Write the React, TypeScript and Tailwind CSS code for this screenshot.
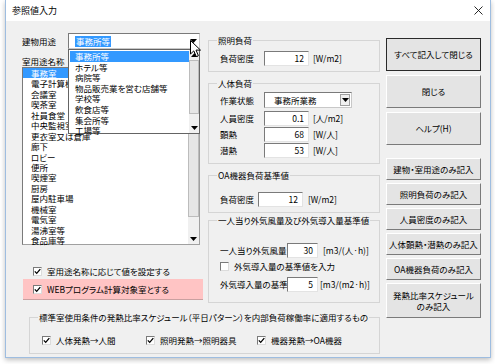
import React from "react"

const roomItems = [
  "事務室",
  "電子計算機室",
  "会議室",
  "喫茶室",
  "社員食堂",
  "中央監視室",
  "更衣室又は倉庫",
  "廊下",
  "ロビー",
  "便所",
  "喫煙室",
  "厨房",
  "屋内駐車場",
  "機械室",
  "電気室",
  "湯沸室等",
  "食品庫等"
]

const buildingItems = [
  "事務所等",
  "ホテル等",
  "病院等",
  "物品販売業を営む店舗等",
  "学校等",
  "飲食店等",
  "集会所等",
  "工場等"
]

function Check({ checked }: { checked?: boolean }) {
  return (
    <span className="relative inline-block h-[9px] w-[9px] shrink-0 border border-t-[#7a7a7a] border-l-[#7a7a7a] border-r-[#dcdcdc] border-b-[#dcdcdc] bg-white">
      {checked && (
        <svg viewBox="0 0 7 7" className="absolute left-0 top-0 h-[7px] w-[7px]">
          <path d="M0.8 3.4 L2.7 5.4 L6.3 1.2" stroke="#000" strokeWidth="1.3" fill="none" />
        </svg>
      )}
    </span>
  )
}

function DownTri() {
  return (
    <svg viewBox="0 0 7 4" className="h-[4px] w-[7px]">
      <path d="M0 0 L7 0 L3.5 4 Z" fill="#000" />
    </svg>
  )
}

function UpTri() {
  return (
    <svg viewBox="0 0 7 4" className="h-[4px] w-[7px]">
      <path d="M0 4 L7 4 L3.5 0 Z" fill="#000" />
    </svg>
  )
}

function Group({
  title,
  className,
  children
}: {
  title: string
  className: string
  children?: React.ReactNode
}) {
  return (
    <div className={`relative border border-[#d5d5d5] ${className}`}>
      <span className="absolute left-[8px] top-[-7px] whitespace-nowrap bg-[#f0f0f0] px-[1px] leading-[12px]">
        {title}
      </span>
      {children}
    </div>
  )
}

function Field({
  label,
  value,
  unit,
  labelW,
  inputW,
  unitGap
}: {
  label: string
  value: string
  unit: string
  labelW: string
  inputW: string
  unitGap: string
}) {
  return (
    <div className="flex h-[15px] items-center">
      <span className={`${labelW} whitespace-nowrap`}>{label}</span>
      <span
        className={`${inputW} flex h-[15px] items-center justify-end border border-t-[#7a7a7a] border-l-[#7a7a7a] border-r-[#e3e3e3] border-b-[#e3e3e3] bg-white pr-[4px]`}>
        {value}
      </span>
      <span className={`${unitGap} whitespace-nowrap`}>{unit}</span>
    </div>
  )
}

function Btn({
  children,
  h,
  main,
  mt
}: {
  children: React.ReactNode
  h: string
  main?: boolean
  mt: string
}) {
  return (
    <div
      className={`${h} ${mt} flex w-[95px] items-center justify-center border text-center leading-[11px] ${
        main
          ? "border-[#2a2a2a] bg-[#e4e4e4]"
          : "border-t-white border-l-white border-r-[#7a7a7a] border-b-[#7a7a7a] bg-[#e4e4e4]"
      }`}>
      {children}
    </div>
  )
}

export default function App() {
  return (
    <div className="h-[364px] w-[495px] bg-white pl-[5px] font-['Noto_Sans_CJK_JP',sans-serif] text-[8.5px] text-black [font-feature-settings:'palt']">
      <div className="w-[486px] border-x border-b border-[#9ebde0] shadow-[0_2px_5px_rgba(0,0,0,0.25)]">
        {/* title bar */}
        <div className="flex h-[21px] items-center justify-between bg-white pl-[6px] pr-[7px]">
          <span className="text-[9px]">参照値入力</span>
          <svg viewBox="0 0 9 9" className="h-[9px] w-[9px]">
            <path d="M0.5 0.5 L8.5 8.5 M8.5 0.5 L0.5 8.5" stroke="#111" strokeWidth="0.9" />
          </svg>
        </div>

        {/* body */}
        <div className="relative flex h-[336px] bg-[#f0f0f0] pl-[16px] pt-[12px]">
          <div className="flex w-[358px] flex-col">
            <div className="flex">
              {/* left column */}
              <div className="flex w-[181px] flex-col">
                <div className="flex h-[16px] items-center">
                  <span className="w-[46px]">建物用途</span>
                  <div className="flex h-[16px] w-[132px] items-center justify-between border border-t-[#7a7a7a] border-l-[#7a7a7a] border-r-[#c8c8c8] border-b-[#c8c8c8] bg-white pl-[6px] pr-[2px]">
                    <span className="bg-[#3399ff] px-[1px] leading-[11px] text-white">事務所等</span>
                    <DownTri />
                  </div>
                </div>
                <div className="mt-[6px] h-[12px] leading-[12px]">室用途名称</div>
                <div className="flex h-[178px] w-[178px] border border-t-[#7a7a7a] border-l-[#7a7a7a] border-r-[#a0a0a0] border-b-[#a0a0a0] bg-white">
                  <div className="flex flex-1 flex-col">
                    {roomItems.map((it, i) => (
                      <div
                        key={it}
                        className={`h-[10.44px] whitespace-nowrap pl-[8px] leading-[10.44px] ${
                          i === 0 ? "bg-[#3399ff] text-white" : ""
                        }`}>
                        {it}
                      </div>
                    ))}
                  </div>
                  <div className="flex w-[11px] flex-col bg-[#f0f0f0]">
                    <div className="flex h-[10px] items-center justify-center">
                      <UpTri />
                    </div>
                    <div className="h-[139px] border border-[#bcbcbc] bg-[#e6e6e6]" />
                    <div className="flex-1" />
                    <div className="flex h-[10px] items-center justify-center">
                      <DownTri />
                    </div>
                  </div>
                </div>
                <div className="mt-[20px] flex h-[12px] items-center gap-[5px] pl-[11px]">
                  <Check checked />
                  <span>室用途名称に応じて値を設定する</span>
                </div>
                <div className="ml-[1px] mt-[2px] flex h-[21px] w-[180px] items-center gap-[5px] border-b border-[#c9a0a0] bg-[#ffc4c4] pl-[10px]">
                  <Check checked />
                  <span>WEBプログラム計算対象室とする</span>
                </div>
              </div>

              {/* middle column */}
              <div className="ml-[5px] mt-[7px] flex w-[172px] flex-col">
                <Group title="照明負荷" className="h-[32px] pl-[11px] pt-[10px]">
                  <Field label="負荷密度" value="12" unit="[W/m2]" labelW="w-[44px]" inputW="w-[45px]" unitGap="ml-[4px]" />
                </Group>

                <Group title="人体負荷" className="mt-[11px] h-[81px] pl-[11px] pt-[8px]">
                  <div className="flex h-[16px] items-center">
                    <span className="w-[44px]">作業状態</span>
                    <div className="flex h-[16px] w-[88px] items-center justify-between border border-t-[#7a7a7a] border-l-[#7a7a7a] border-r-[#c8c8c8] border-b-[#c8c8c8] bg-white pl-[9px] pr-[1px]">
                      <span>事務所業務</span>
                      <span className="flex h-[12px] w-[10px] items-center justify-center border border-[#a0a0a0] bg-[#f0f0f0]">
                        <DownTri />
                      </span>
                    </div>
                  </div>
                  <div className="mt-[3px] flex flex-col gap-[1px]">
                    <Field label="人員密度" value="0.1" unit="[人/m2]" labelW="w-[44px]" inputW="w-[45px]" unitGap="ml-[4px]" />
                    <Field label="顕熱" value="68" unit="[W/人]" labelW="w-[44px]" inputW="w-[45px]" unitGap="ml-[4px]" />
                    <Field label="潜熱" value="53" unit="[W/人]" labelW="w-[44px]" inputW="w-[45px]" unitGap="ml-[4px]" />
                  </div>
                </Group>

                <Group title="OA機器負荷基準値" className="mt-[11px] h-[38px] pl-[11px] pt-[16px]">
                  <Field label="負荷密度" value="12" unit="[W/m2]" labelW="w-[38px]" inputW="w-[45px]" unitGap="ml-[5px]" />
                </Group>

                <Group title="一人当り外気風量及び外気導入量基準値" className="mt-[7px] h-[83px] pl-[11px] pt-[22px]">
                  <Field label="一人当り外気風量" value="30" unit="[m3/(人·h)]" labelW="w-[67px]" inputW="w-[31px]" unitGap="ml-[5px]" />
                  <div className="mt-[2px] flex h-[12px] items-center gap-[5px]">
                    <Check />
                    <span>外気導入量の基準値を入力</span>
                  </div>
                  <div className="mt-[5px]">
                    <Field label="外気導入量の基準" value="5" unit="[m3/(m2·h)]" labelW="w-[67px]" inputW="w-[31px]" unitGap="ml-[2px]" />
                  </div>
                </Group>
              </div>
            </div>

            {/* bottom group */}
            <Group
              title="標準室使用条件の発熱比率スケジュール（平日パターン）を内部負荷稼働率に適用するもの"
              className="ml-[7px] mt-[14px] h-[37px] w-[351px] pl-[12px] pt-[16px]">
              <div className="flex h-[12px] items-center">
                <div className="flex w-[104px] items-center gap-[5px]">
                  <Check checked />
                  <span>人体発熱→人間</span>
                </div>
                <div className="flex w-[111px] items-center gap-[5px]">
                  <Check checked />
                  <span>照明発熱→照明器具</span>
                </div>
                <div className="flex items-center gap-[5px]">
                  <Check checked />
                  <span>機器発熱→OA機器</span>
                </div>
              </div>
            </Group>
          </div>

          {/* right column */}
          <div className="ml-[6px] mt-[5px] flex w-[95px] flex-col">
            <Btn h="h-[33px]" mt="mt-0" main>
              すべて記入して閉じる
            </Btn>
            <Btn h="h-[33px]" mt="mt-[4px]">
              閉じる
            </Btn>
            <Btn h="h-[33px]" mt="mt-[4px]">
              ヘルプ(H)
            </Btn>
            <Btn h="h-[22px]" mt="mt-[13px]">
              建物・室用途のみ記入
            </Btn>
            <Btn h="h-[22px]" mt="mt-[3px]">
              照明負荷のみ記入
            </Btn>
            <Btn h="h-[22px]" mt="mt-[3px]">
              人員密度のみ記入
            </Btn>
            <Btn h="h-[22px]" mt="mt-[3px]">
              人体顕熱・潜熱のみ記入
            </Btn>
            <Btn h="h-[22px]" mt="mt-[3px]">
              OA機器負荷のみ記入
            </Btn>
            <Btn h="h-[35px]" mt="mt-[3px]">
              <span>
                発熱比率スケジュール
                <br />
                のみ記入
              </span>
            </Btn>
          </div>

          {/* open dropdown of 建物用途 */}
          <div className="absolute left-[62px] top-[28px] flex h-[85px] w-[132px] border border-[#646464] bg-white">
            <div className="flex flex-1 flex-col pl-[1px] pt-[1px]">
              {buildingItems.map((it, i) => (
                <div
                  key={it}
                  className={`h-[10.6px] whitespace-nowrap pl-[5px] leading-[10.6px] ${
                    i === 0 ? "bg-[#3399ff] text-white" : ""
                  }`}>
                  {it}
                </div>
              ))}
            </div>
            <div className="flex w-[10px] flex-col bg-[#f0f0f0]">
              <div className="flex h-[10px] items-center justify-center">
                <UpTri />
              </div>
              <div className="h-[54px] border border-[#bcbcbc] bg-[#e6e6e6]" />
              <div className="flex-1" />
              <div className="flex h-[10px] items-center justify-center">
                <DownTri />
              </div>
            </div>
          </div>

          {/* mouse pointer */}
          <svg viewBox="0 0 12 18" className="absolute left-[184px] top-[19px] h-[18px] w-[12px]">
            <path
              d="M0.5 0.5 L0.5 14 L3.8 10.9 L6.3 16.6 L8.4 15.7 L6 10.1 L10.5 10.1 Z"
              fill="#fff"
              stroke="#000"
              strokeWidth="1"
              strokeLinejoin="round"
            />
          </svg>
        </div>
      </div>
    </div>
  )
}
